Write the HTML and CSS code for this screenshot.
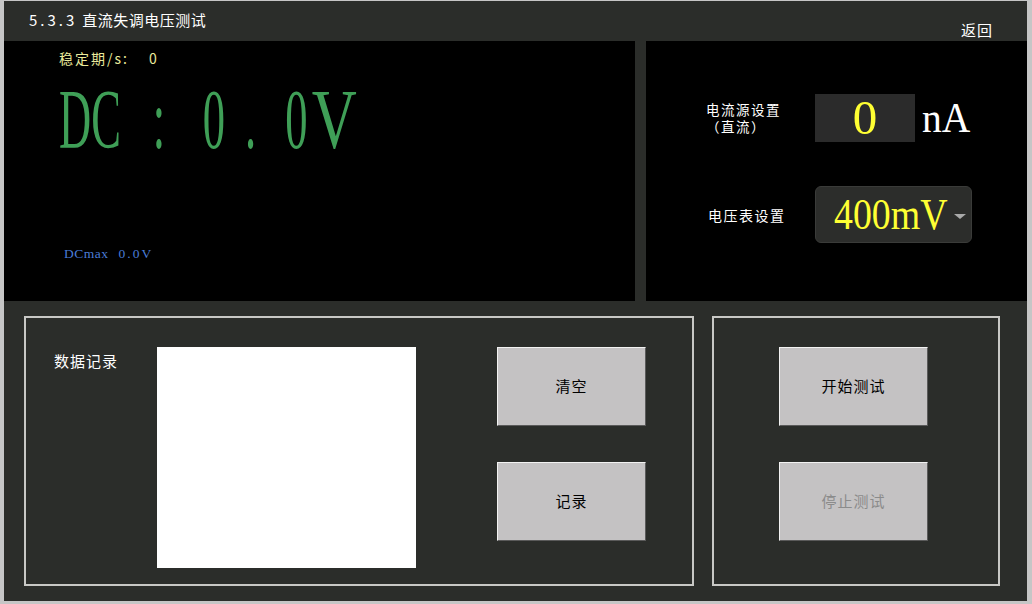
FILE: index.html
```html
<!DOCTYPE html>
<html lang="zh-CN">
<head>
<meta charset="utf-8">
<title>5.3.3 直流失调电压测试</title>
<link rel="stylesheet" href="styles.css">
</head>
<body>
<div class="window">
  <header class="header">
    <div class="title"><span class="title-num">5.3.3</span>直流失调电压测试</div>
    <div class="back">返回</div>
  </header>
  <section class="top">
    <div class="meter">
      <div class="settle">稳定期/s:<span class="settle-val">0</span></div>
      <div class="dc-line"><span class="dc"><span class="p-dc">DC</span><span class="p-colon">:</span><span class="p-0">0</span><span class="p-dot">.</span><span class="p-02">0</span><span class="p-v">V</span></span></div>
      <div class="dcmax">DCmax<span class="dcmax-val">0.0V</span></div>
    </div>
    <div class="settings">
      <div class="row row-current">
        <div class="label"><div class="label-line">电流源设置</div><div class="label-line">（直流）</div></div>
        <div class="input">0</div>
        <div class="unit">nA</div>
      </div>
      <div class="row row-volt">
        <div class="label">电压表设置</div>
        <div class="select"><span class="select-val">400mV</span><span class="arrow"></span></div>
      </div>
    </div>
  </section>
  <section class="bottom">
    <div class="group group-data">
      <div class="data-label">数据记录</div>
      <div class="list"></div>
      <div class="btn-col">
        <div class="btn">清空</div>
        <div class="btn">记录</div>
      </div>
    </div>
    <div class="group group-test">
      <div class="btn-col">
        <div class="btn">开始测试</div>
        <div class="btn btn-disabled">停止测试</div>
      </div>
    </div>
  </section>
</div>
</body>
</html>
```

FILE: styles.css
```css
html, body {
  margin: 0;
  padding: 0;
}
body {
  background: #c6c6c6;
  width: 1032px;
  height: 604px;
  overflow: hidden;
  font-family: "Noto Sans CJK SC", "Noto Sans", sans-serif;
}
.window {
  margin: 1px 0 0 4px;
  width: 1023px;
  height: 600px;
  background: #2b2d2a;
  display: flex;
  flex-direction: column;
}
.header {
  height: 40px;
  display: flex;
  align-items: flex-start;
  color: #ffffff;
  font-size: 15px;
  line-height: 18px;
}
.title {
  margin: 10px 0 0 25px;
  letter-spacing: 0.5px;
}
.title-num {
  letter-spacing: 3px;
  margin-right: 5px;
}
.back {
  margin: 20px 34px 0 auto;
  letter-spacing: 1px;
}
.top {
  height: 260px;
  display: flex;
  gap: 11px;
}
.meter {
  width: 631px;
  background: #000;
  padding: 8px 0 0 55px;
  box-sizing: border-box;
}
.settle {
  color: #eaea9c;
  font-size: 14px;
  line-height: 18px;
  letter-spacing: 2px;
}
.settle-val {
  margin-left: 20px;
}
.dc-line {
  margin-top: 11px;
  height: 84px;
}
.dc {
  display: inline-flex;
  font-family: "Liberation Serif", serif;
  font-size: 84px;
  line-height: 84px;
  color: #3f9f57;
  transform: scaleX(0.53);
  transform-origin: 0 0;
  white-space: nowrap;
}
.p-colon { margin-left: 60px; }
.p-0 { margin-left: 71px; }
.p-dot { margin-left: 38px; }
.p-02 { margin-left: 55px; }
.p-v {
  margin-left: 8px;
  display: inline-block;
  transform: scaleX(1.4);
  transform-origin: 0 0;
}
.dcmax {
  margin: 83px 0 0 5px;
  color: #4a7cd6;
  font-family: "Liberation Serif", serif;
  font-size: 13.5px;
  line-height: 18px;
  letter-spacing: 0.5px;
}
.dcmax-val {
  margin-left: 10px;
  letter-spacing: 2px;
}
.settings {
  flex: 1;
  background: #000;
  padding: 53px 0 0 60px;
  box-sizing: border-box;
  display: flex;
  flex-direction: column;
  gap: 44px;
}
.row {
  display: flex;
  align-items: center;
}
.label {
  width: 109px;
  color: #fff;
  font-size: 14px;
  line-height: 16px;
  letter-spacing: 1.5px;
}
.label-line {
  font-size: 13.5px;
  line-height: 17px;
  height: 17px;
}
.row-volt .label {
  width: 107px;
  padding-left: 2px;
}
.input {
  width: 100px;
  height: 48px;
  background: #2b2b2b;
  color: #ffff33;
  font-family: "Liberation Serif", serif;
  font-size: 49px;
  line-height: 48px;
  text-align: center;
}
.unit {
  margin-left: 7px;
  color: #fff;
  font-family: "Liberation Serif", serif;
  font-size: 42px;
  line-height: 48px;
  transform: scaleX(0.94);
  transform-origin: 0 50%;
}
.select {
  width: 157px;
  height: 57px;
  box-sizing: border-box;
  background: #2c2d2b;
  border: 1px solid #3a3b39;
  border-radius: 6px;
  display: flex;
  align-items: center;
  position: relative;
}
.select-val {
  display: inline-block;
  margin-left: 18px;
  color: #ffff33;
  font-family: "Liberation Serif", serif;
  font-size: 44px;
  line-height: 50px;
  transform: scaleX(0.86);
  transform-origin: 0 50%;
}
.arrow {
  position: absolute;
  right: 5px;
  top: 27px;
  width: 0;
  height: 0;
  border-left: 6px solid transparent;
  border-right: 6px solid transparent;
  border-top: 5px solid #a9a9a9;
}
.bottom {
  flex: 1;
  display: flex;
  gap: 18px;
  padding: 15px 0 0 20px;
}
.group {
  height: 270px;
  box-sizing: border-box;
  border: 2px solid #c8c8c5;
  display: flex;
  align-items: flex-start;
  padding-top: 29px;
}
.group-data {
  width: 670px;
}
.group-test {
  width: 288px;
  padding-left: 65px;
}
.data-label {
  width: 131px;
  box-sizing: border-box;
  padding-left: 28px;
  margin-top: 5px;
  color: #fff;
  font-size: 15px;
  line-height: 18px;
  letter-spacing: 1px;
}
.list {
  width: 259px;
  height: 221px;
  background: #fff;
}
.group-data .btn-col {
  margin-left: 81px;
}
.btn-col {
  display: flex;
  flex-direction: column;
  gap: 36px;
}
.btn {
  width: 149px;
  height: 79px;
  box-sizing: border-box;
  padding-bottom: 2px;
  background: #c4c2c3;
  border-top: 1px solid #f2f2f2;
  border-left: 1px solid #f2f2f2;
  border-bottom: 1px solid #5a5a5a;
  border-right: 1px solid #5a5a5a;
  display: flex;
  align-items: center;
  justify-content: center;
  color: #000;
  font-size: 15px;
  letter-spacing: 1px;
}
.btn-disabled {
  color: #8b8b8b;
}
```
